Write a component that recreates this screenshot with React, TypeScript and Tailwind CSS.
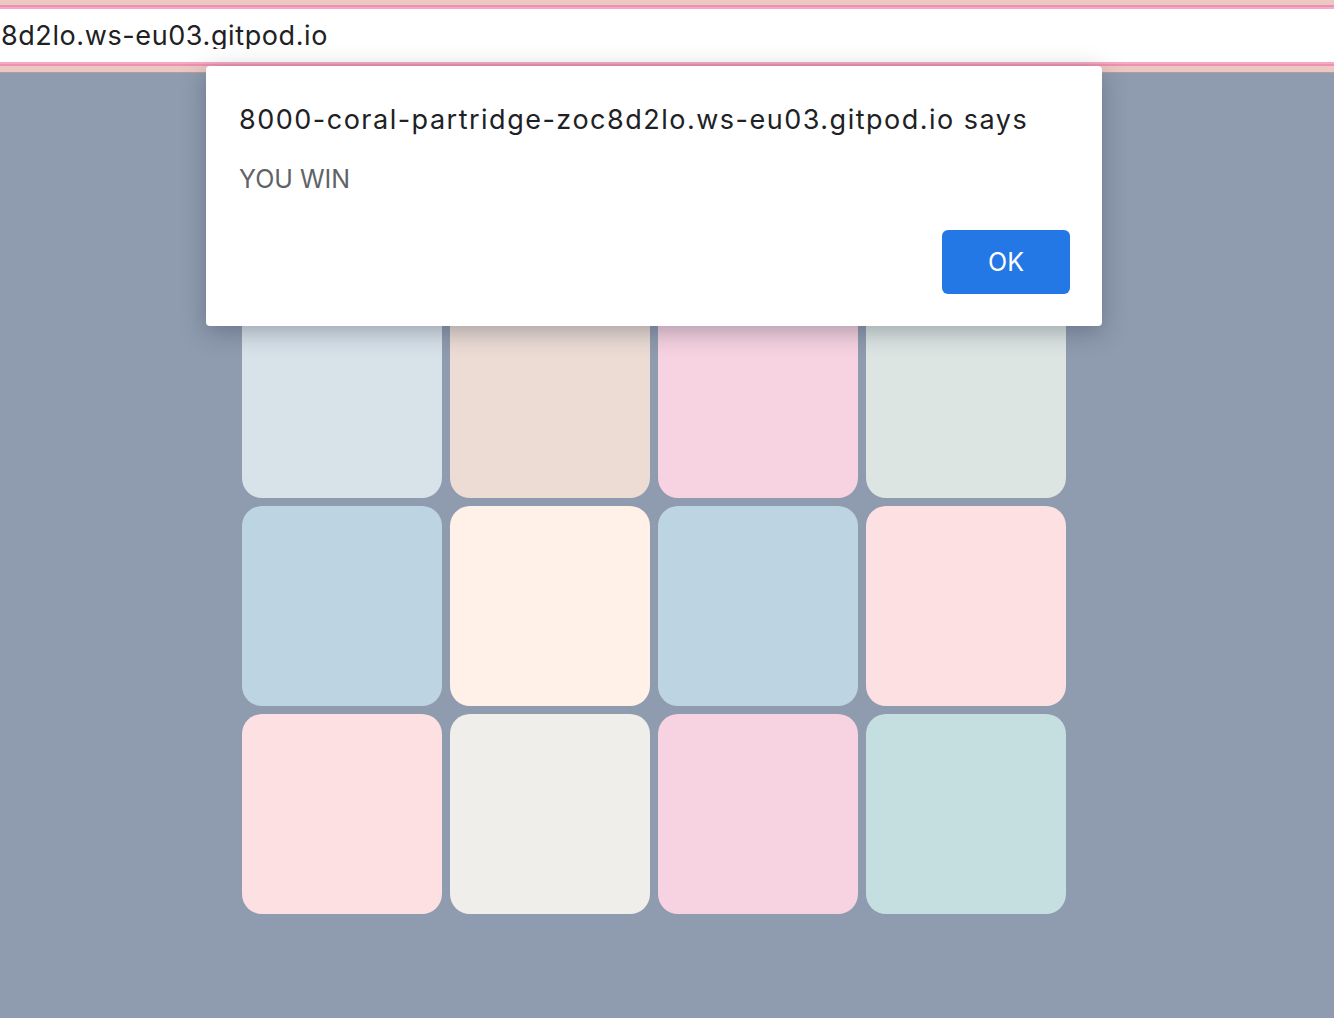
import React from "react";

const tiles = [
  "bg-[#d8e2e9]", "bg-[#ecdcd4]", "bg-[#f7d2e0]", "bg-[#dce5e2]",
  "bg-[#bdd4e3]", "bg-[#fff0e8]", "bg-[#bdd4e3]", "bg-[#fde0e2]",
  "bg-[#fde0e2]", "bg-[#f0eeea]", "bg-[#f7d2e0]", "bg-[#c5dedf]",
];

export default function App() {
  return (
    <div className="relative w-[1334px] h-[1018px] overflow-hidden bg-[#8f9baf] font-['Inter','Liberation_Sans',sans-serif]">
      {/* browser-like url bar */}
      <div className="flex flex-col">
        <div className="h-[5px] bg-[#ecc8c2]" />
        <div className="h-[2px] bg-[#ee90b0]" />
        <div className="h-[2px] bg-[#f6a9c5]" />
        <div className="h-[53px] bg-white flex items-center">
          <div className="w-[328px] overflow-hidden flex justify-end">
            <span className="whitespace-nowrap text-[27px] text-[#202124] leading-none tracking-[0.6px]">
              8000-coral-partridge-zoc8d2lo.ws-eu03.gitpod.io
            </span>
          </div>
        </div>
        <div className="h-[2px] bg-[#f6a9c5]" />
        <div className="h-[2px] bg-[#ee90b0]" />
        <div className="h-[6px] bg-[#ecc8c2]" />
        <div className="h-[1px] bg-[#b89c98]" />
      </div>

      {/* game grid */}
      <div className="ml-[242px] mt-[225px] grid grid-cols-[repeat(4,200px)] gap-[8px]">
        {tiles.map((c, i) => (
          <div key={i} className={`h-[200px] w-[200px] rounded-[20px] ${c}`} />
        ))}
      </div>

      {/* alert dialog */}
      <div className="absolute left-[206px] top-[66px] w-[896px] h-[260px] bg-white rounded-[4px] shadow-[0_6px_24px_rgba(40,50,70,0.35)]">
        <div className="pl-[33px] pt-[38px] text-[27px] leading-[32px] text-[#202124] tracking-[1.5px] whitespace-nowrap">
          8000-coral-partridge-zoc8d2lo.ws-eu03.gitpod.io says
        </div>
        <div className="pl-[33px] pt-[29px] text-[25px] leading-[28px] text-[#5f6368]">
          YOU WIN
        </div>
        <button className="absolute left-[736px] top-[164px] w-[128px] h-[64px] rounded-[6px] bg-[#2478e6] text-white text-[25px] flex items-center justify-center pt-[1px]">
          OK
        </button>
      </div>
    </div>
  );
}
